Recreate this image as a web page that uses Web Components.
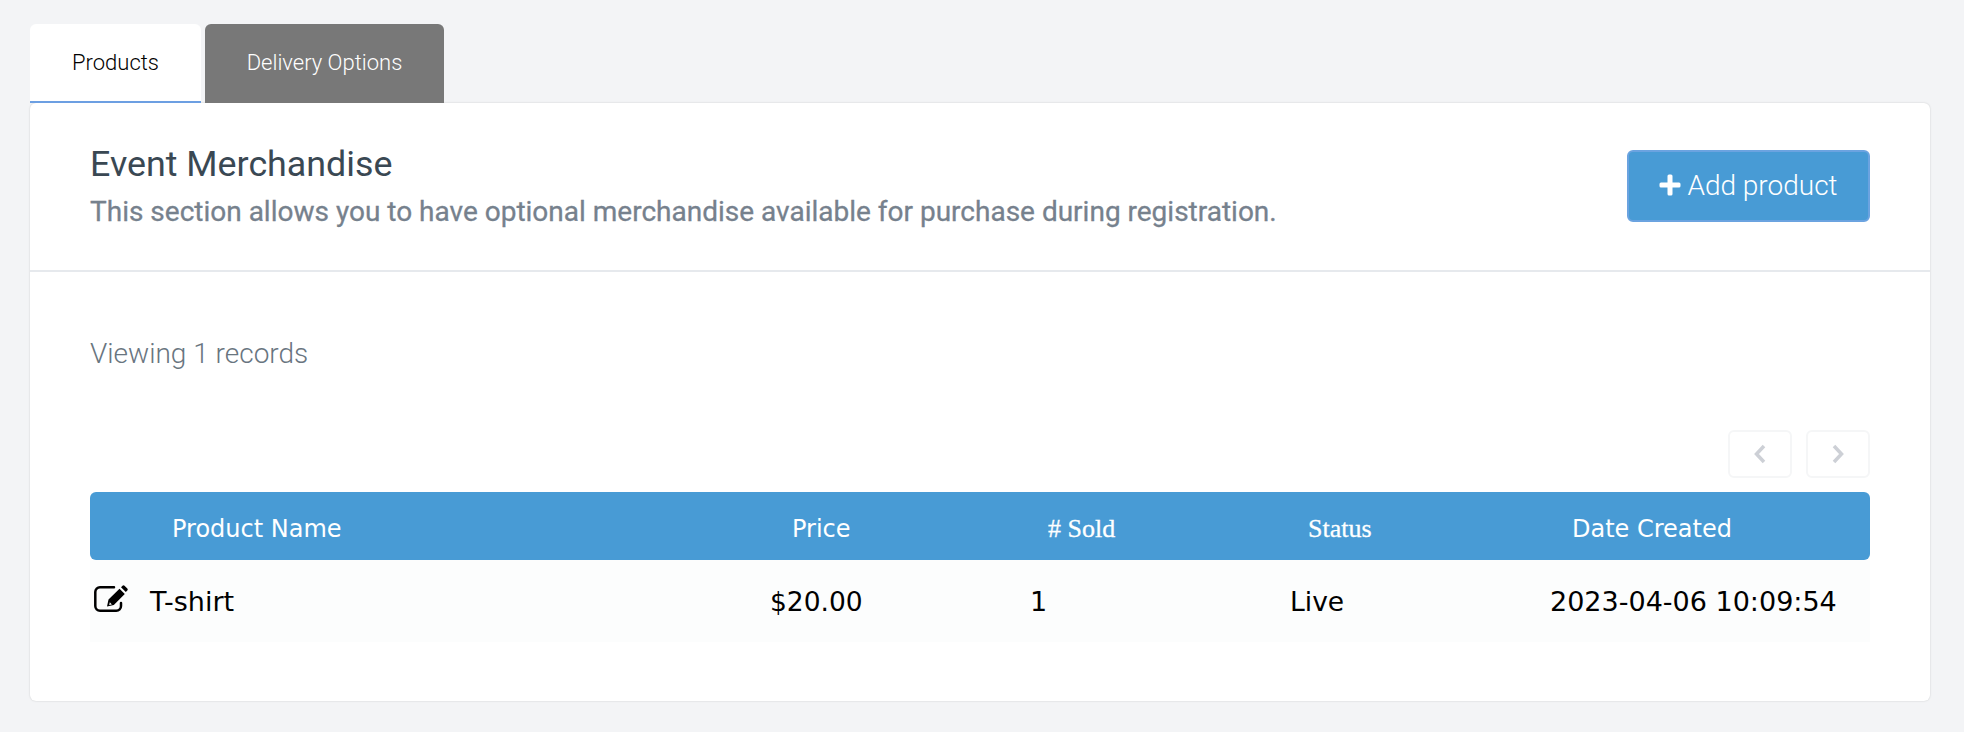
<!DOCTYPE html>
<html>
<head>
<meta charset="utf-8">
<title>Event Merchandise</title>
<style>
html,body{margin:0;padding:0;background:#f3f4f6;}
body{font-family:Roboto,sans-serif;}
</style>
</head>
<body>
<merch-page>
    <merch-tabs></merch-tabs>
    <merch-card>
        <merch-header slot="header" data-title="Event Merchandise" data-text="This section allows you to have optional merchandise available for purchase during registration."></merch-header>
        <merch-records data-count="1"></merch-records>
        <merch-pager></merch-pager>
        <merch-table></merch-table>
    </merch-card>
</merch-page>
<script>
class MerchPage extends HTMLElement{
    constructor(){
        super();
        this.attachShadow({mode:"open"});
        this.shadowRoot.innerHTML = `
<style>
:host{display:block;padding:24px 34px 31px 30px;}
</style>
<slot></slot>`;
    }
}

class MerchTabs extends HTMLElement{
    constructor(){
        super();
        this.attachShadow({mode:"open"});
        this.shadowRoot.innerHTML = `
<style>
:host{display:flex;gap:4px;height:79px;font:300 22px Roboto,sans-serif;}
div{display:flex;align-items:center;justify-content:center;box-sizing:border-box;border-radius:6px 6px 0 0;}
.on{width:171px;background:#fff;color:#000;border-bottom:2px solid #6c9fe2;padding-bottom:1px;}
.off{width:239px;background:#787878;color:#fff;padding-bottom:3px;}
</style>
<div class="on">Products</div>
<div class="off">Delivery Options</div>`;
    }
}

class MerchCard extends HTMLElement{
    constructor(){
        super();
        this.attachShadow({mode:"open"});
        this.shadowRoot.innerHTML = `
<style>
:host{display:block;background:#fff;border-radius:6px;box-shadow:0 0 2px rgba(0,0,0,.18);height:598px;}
.body{padding:0 60px;}
</style>
<slot name="header"></slot>
<div class="body"><slot></slot></div>`;
    }
}

class MerchHeader extends HTMLElement{
    constructor(){
        super();
        this.attachShadow({mode:"open"});
        this.shadowRoot.innerHTML = `
<style>
:host{display:flex;justify-content:space-between;box-sizing:border-box;height:169px;padding:41px 60px 0;border-bottom:2px solid #e6e9ed;}
h2{margin:0;font:400 35.800px/40px Roboto,sans-serif;color:#3a4853;}
p{margin:12px 0 0;font:400 28px/32px Roboto,sans-serif;color:#76818d;-webkit-text-stroke:.3px #76818d;}
button{box-sizing:border-box;width:243px;height:72px;margin-top:6px;display:flex;align-items:center;justify-content:center;gap:6px;
    background:#489bd5;border:2px solid #6ba3e0;border-radius:6px;color:#fff;font:300 28px Roboto,sans-serif;padding:0 0 2px;}
svg{width:22px;height:22px;fill:#fff;}
</style>
<div><h2></h2><p></p></div>
<button type="button"><svg viewBox="0 0 22 22"><path d="M8.5 2a1.5 1.5 0 0 1 1.5-1.5h2A1.5 1.5 0 0 1 13.5 2v6.500H20a1.500 1.500 0 0 1 1.500 1.500v2a1.500 1.500 0 0 1-1.500 1.500h-6.500V20a1.500 1.500 0 0 1-1.500 1.500h-2A1.500 1.500 0 0 1 8.500 20v-6.500H2A1.500 1.500 0 0 1 .5 12v-2A1.500 1.500 0 0 1 2 8.500h6.500z"/></svg>Add product</button>`;
    }
    connectedCallback(){
        this.shadowRoot.querySelector("h2").textContent = this.dataset.title;
        this.shadowRoot.querySelector("p").textContent = this.dataset.text;
    }
}

class MerchRecords extends HTMLElement{
    constructor(){
        super();
        this.attachShadow({mode:"open"});
        this.shadowRoot.innerHTML = `
<style>
:host{display:block;padding-top:65px;font:300 28px/34px Roboto,sans-serif;color:#69757f;}
</style>
<span></span>`;
    }
    connectedCallback(){
        this.shadowRoot.querySelector("span").textContent = `Viewing ${this.dataset.count} records`;
    }
}

class MerchPager extends HTMLElement{
    constructor(){
        super();
        this.attachShadow({mode:"open"});
        this.shadowRoot.innerHTML = `
<style>
:host{display:flex;justify-content:flex-end;gap:14px;margin-top:59px;}
div{box-sizing:border-box;width:64px;height:48px;border:2px solid #f5f6f7;border-radius:6px;display:flex;align-items:center;justify-content:center;}
svg{width:12px;height:20px;fill:none;stroke:#cdd0d6;stroke-width:3.500;}
</style>
<div><svg viewBox="0 0 12 20"><path d="M10 2 2.500 10 10 18"/></svg></div>
<div><svg viewBox="0 0 12 20"><path d="M2 2 9.500 10 2 18"/></svg></div>`;
    }
}

class MerchTable extends HTMLElement{
    constructor(){
        super();
        this.attachShadow({mode:"open"});
        this.shadowRoot.innerHTML = `
<style>
:host{display:block;margin-top:14px;font:27px "DejaVu Sans",sans-serif;}
.row{display:grid;grid-template-columns:670px 260px 259px 261px 330px;align-items:center;white-space:nowrap;}
.head{box-sizing:border-box;height:68px;padding-top:5px;background:#489bd5;color:#fff;border-radius:6px;font-size:24px;}
.head span{padding-left:32px;}
.head .name{padding-left:82px;}
.head .serif{font:26px "Liberation Serif",serif;padding-left:28px;-webkit-text-stroke:.3px #fff;}
.head .status{padding-left:29px;}
.data{height:82px;background:#fcfdfd;color:#000;}
.data span{padding-left:10px;}
.data .tight{font-size:26.500px;}
.data .live{padding-left:11px;}
.data .name{padding-left:4px;display:flex;align-items:center;gap:22px;}
svg{width:34px;height:27px;flex:none;margin-top:-5px;}
</style>
<div class="row head">
    <span class="name">Product Name</span><span>Price</span><span class="serif"># Sold</span><span class="serif status">Status</span><span>Date Created</span>
</div>
<div class="row data">
    <span class="name"><svg viewBox="0 0 34 27"><path d="M20 2.300H6a4.700 4.700 0 0 0-4.700 4.700v14a4.700 4.700 0 0 0 4.700 4.700h16.300a4.700 4.700 0 0 0 4.700-4.700v-3" fill="none" stroke="#000" stroke-width="2.500" stroke-linecap="round"/><path d="M27 2.300 28.500.8a1.500 1.500 0 0 1 2 0l2.800 2.700a1.500 1.500 0 0 1 0 2L31.800 7zM25.500 3.800 30.800 9 19.800 20 13 21.500 14.500 14.500zM15.800 17.300 15.200 20 17.900 19.400z" fill="#000" fill-rule="evenodd"/></svg>T-shirt</span>
    <span class="tight">$20.00</span><span>1</span><span class="live tight">Live</span><span>2023-04-06 10:09:54</span>
</div>`;
    }
}

customElements.define("merch-page", MerchPage);
customElements.define("merch-tabs", MerchTabs);
customElements.define("merch-card", MerchCard);
customElements.define("merch-header", MerchHeader);
customElements.define("merch-records", MerchRecords);
customElements.define("merch-pager", MerchPager);
customElements.define("merch-table", MerchTable);
</script>
</body>
</html>
